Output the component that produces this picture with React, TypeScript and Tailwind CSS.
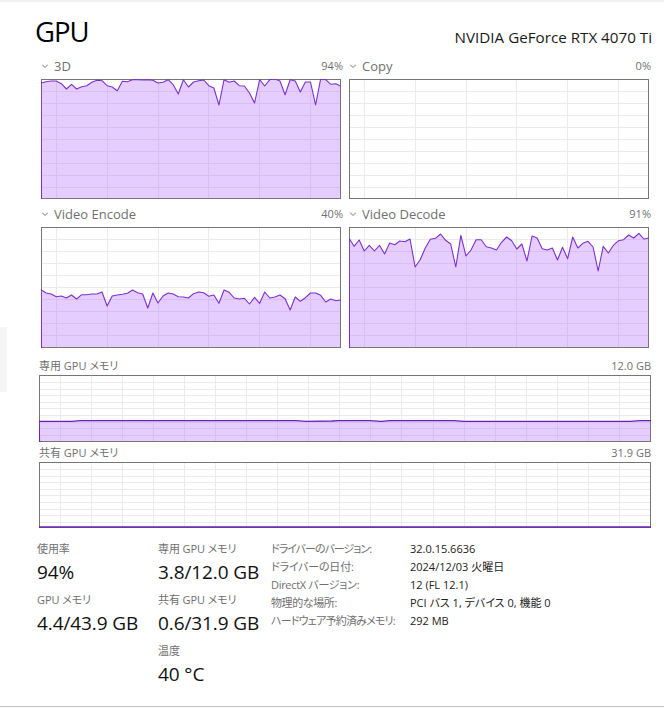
const font = { fontFamily: '"Open Sans", "Noto Sans CJK JP", sans-serif' };

const GRID_COLOR = "#ebebeb";
const FILL_COLOR = "#a85cff";
const LINE_COLOR = "#7d2fd0";
const FRAME_COLOR = "#767676";

// sampled from the graph, y offset from the top of the frame
const series3d = [4, 2.7, 2, 2, 4.7, 10, 5.3, 10, 7.7, 6.7, 3.3, 1.3, 1.7, 6.7, 8, 11.7, 2.3, 2.7, 0.7, 0.7, 1, 0.7, 1.3, 4, 3.3, 0.7, 5.7, 15, 0.7, 8, 3, 1.7, 1, 6.7, 9, 26, 0.7, 3.3, 2, 6.7, 7, 14, 24, 0.7, 7, 0.7, 0, 2, 15.7, 0.7, 2, 13, 3, 3, 26, 0, 0.7, 5.3, 4.7, 7.3];
const seriesEncode = [62.7, 66, 67, 69.7, 69, 71, 68, 72, 67.7, 67.7, 67, 67, 65, 79, 69, 68, 67.3, 66.3, 63, 65.7, 67, 81, 66, 76, 69, 66, 67, 69.7, 70, 71, 66.7, 65, 65.7, 69.3, 68, 76.3, 63, 65.3, 71, 72, 71.3, 77, 70.3, 76.3, 65, 71, 70, 68, 71.7, 83, 70, 74.3, 70.7, 66, 66, 68.3, 75, 72, 73.7, 73];
const seriesDecode = [11.3, 19.3, 13, 24, 18.3, 24, 18.3, 27, 16, 17.7, 14, 14.7, 12, 40, 32.7, 21, 12.3, 11.3, 7, 13.3, 17, 40, 8.3, 29, 23, 12.7, 12.7, 19.7, 21, 23, 15.3, 10, 13.7, 22, 17, 34, 9, 11, 21.7, 23, 21, 33, 20.3, 31.7, 10, 21, 16.3, 14.3, 20, 44, 19.3, 26, 18.3, 13.7, 12.7, 8, 11, 6.3, 12, 11];

const dedicatedLine: [number, number][] = [[0, 46.3], [33, 46.3], [41, 45.7], [257, 45.7], [267, 46.3], [293, 46], [300, 45.7], [331, 45.7], [342, 46.3], [351, 45.7], [415, 45.7], [425, 46.3], [591, 46.3], [601, 45.7], [612, 45.7]];
const sharedLine: [number, number][] = [[0, 65], [612, 65]];

function toPoints(values: number[], width: number): [number, number][] {
  const step = width / (values.length - 1);
  return values.map((y, i) => [i * step, y]);
}

function Graph({
  width,
  height,
  points,
  columns,
  rows,
  strokeWidth = 1.1,
  stroke = LINE_COLOR,
}: {
  width: number;
  height: number;
  points?: [number, number][];
  columns: number[];
  rows: number[];
  strokeWidth?: number;
  stroke?: string;
}) {
  const line = points ? points.map(([x, y]) => `${x},${y}`).join(" ") : "";
  return (
    <svg width={width} height={height} className="block">
      <rect x={0} y={0} width={width} height={height} fill="#ffffff" />
      {columns.map((x) => (
        <line key={`c${x}`} x1={x} y1={0} x2={x} y2={height} stroke={GRID_COLOR} strokeWidth={1} />
      ))}
      {rows.map((y) => (
        <line key={`r${y}`} x1={0} y1={y} x2={width} y2={y} stroke={GRID_COLOR} strokeWidth={1} />
      ))}
      {points && (
        <polygon points={`0,${height} ${line} ${width},${height}`} fill={FILL_COLOR} fillOpacity={0.3} />
      )}
      <rect x={0.5} y={0.5} width={width - 1} height={height - 1} fill="none" stroke={FRAME_COLOR} strokeWidth={1} />
      {points && (
        <polyline points={`0.5,${height} ${line}`} fill="none" stroke={stroke} strokeWidth={strokeWidth} strokeLinejoin="round" />
      )}
    </svg>
  );
}

const engineColumns = [15.5, 66.5, 117.5, 167.5, 218.5, 269.5];
const engineRows = [12.5, 24.5, 36.5, 48.5, 60.5, 72.5, 84.5, 96.5, 108.5];
const memoryColumns = [21.5, 52.5, 83.5, 114.5, 145.5, 176.5, 207.5, 238.5, 269.5, 300.5, 331.5, 362.5, 394.5, 425.5, 456.5, 487.5, 518.5, 549.5, 580.5];
const memoryRows = [7.5, 14.5, 20.5, 27.5, 33.5, 40.5, 47.5, 53.5, 60.5];

function Engine({
  name,
  percent,
  series,
  height = 120,
}: {
  name: string;
  percent: string;
  series?: number[];
  height?: number;
}) {
  return (
    <div className="w-[300px]">
      <div className="flex h-5 items-center justify-between pb-[6px]">
        <div className="flex items-center gap-[6px] pl-px">
          <svg width="6" height="4" className="block">
            <polyline points="0,0.5 3,3.5 6,0.5" fill="none" stroke="#777777" strokeWidth="1" />
          </svg>
          <span className="text-[13px] leading-5 text-[#707070]">{name}</span>
        </div>
        <span className="-mr-[2px] text-[11px] leading-5 text-[#707070]">{percent}</span>
      </div>
      <Graph width={300} height={height} points={series ? toPoints(series, 300) : undefined} columns={engineColumns} rows={engineRows} />
    </div>
  );
}

function Stat({ label, value }: { label: string; value: string }) {
  return (
    <div className="h-[51px]">
      <div className="h-4 text-[11px] leading-4 tracking-[-0.1px] text-[#707070]">{label}</div>
      <div className="mt-px text-[19px] leading-[28px] tracking-[-0.1px] text-[#111111]">{value}</div>
    </div>
  );
}

const details = [
  { label: "ドライバーのバージョン:", value: "32.0.15.6636", fit: "tracking-[-1px]" },
  { label: "ドライバーの日付:", value: "2024/12/03 火曜日", fit: "tracking-[-0.2px]" },
  { label: "DirectX バージョン:", value: "12 (FL 12.1)", fit: "tracking-[-0.3px]" },
  { label: "物理的な場所:", value: "PCI バス 1, デバイス 0, 機能 0", fit: "tracking-[-0.4px]" },
  { label: "ハードウェア予約済みメモリ:", value: "292 MB", fit: "tracking-[-0.8px]" },
];

export default function App() {
  return (
    <div className="relative flex h-[708px] w-[664px] flex-col overflow-hidden bg-white [font-feature-settings:'palt']" style={font}>
      <div className="h-[2px] bg-[#f2f2f2]" />
      <div className="absolute left-0 top-[327px] h-[65px] w-[7px] bg-[#f5f5f5]" />

      <div className="flex h-[57px] items-end justify-between pb-[8px] pl-[35px] pr-[12px]">
        <div className="text-[27.5px] leading-[38px] tracking-[-1px] text-black">GPU</div>
        <div className="mb-[4px] text-[15.2px] leading-5 text-[#1a1a1a]">NVIDIA GeForce RTX 4070 Ti</div>
      </div>

      <div className="ml-[41px] grid w-[608px] grid-cols-[300px_300px] gap-x-2 gap-y-2">
        <Engine name="3D" percent="94%" series={series3d} />
        <Engine name="Copy" percent="0%" />
        <Engine name="Video Encode" percent="40%" series={seriesEncode} height={121} />
        <Engine name="Video Decode" percent="91%" series={seriesDecode} height={121} />
      </div>

      <div className="ml-[39px] mt-[9px] w-[612px]">
        <div className="flex h-[18px] items-center justify-between text-[11px] text-[#707070]">
          <span>専用 GPU メモリ</span>
          <span>12.0 GB</span>
        </div>
        <Graph width={612} height={67} points={dedicatedLine} columns={memoryColumns} rows={memoryRows} strokeWidth={1.3} stroke="#6a22b4" />
        <div className="mt-[2px] flex h-[18px] items-center justify-between text-[11px] text-[#707070]">
          <span>共有 GPU メモリ</span>
          <span>31.9 GB</span>
        </div>
        <Graph width={612} height={66} points={sharedLine} columns={memoryColumns} rows={memoryRows} strokeWidth={1.6} stroke="#6a22b4" />
      </div>

      <div className="ml-[37px] mt-[13px] flex">
        <div className="w-[121px]">
          <Stat label="使用率" value="94%" />
          <Stat label="GPU メモリ" value="4.4/43.9 GB" />
        </div>
        <div className="w-[113px]">
          <Stat label="専用 GPU メモリ" value="3.8/12.0 GB" />
          <Stat label="共有 GPU メモリ" value="0.6/31.9 GB" />
          <Stat label="温度" value="40 °C" />
        </div>
        <div className="flex flex-col gap-[2px]">
          {details.map((row) => (
            <div key={row.label} className="flex h-4 whitespace-nowrap text-[11px] leading-4">
              <div className={`w-[139px] text-[#707070] ${row.fit}`}>{row.label}</div>
              <div className="text-[#222222]">{row.value}</div>
            </div>
          ))}
        </div>
      </div>

      <div className="mb-[1px] mt-auto h-px bg-[#c4c4c4]" />
    </div>
  );
}
